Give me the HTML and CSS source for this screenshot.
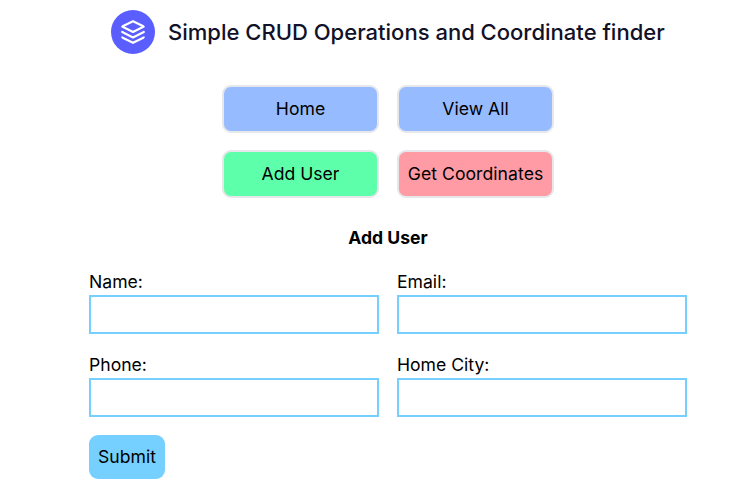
FILE: index.html
```
<!DOCTYPE html>
<html lang="en">
<head>
<meta charset="utf-8">
<title>Add User</title>
<link rel="stylesheet" href="styles.css">
</head>
<body>
<header class="brand">
  <svg class="logo" viewBox="0 0 24 24" fill="none" stroke="currentColor" stroke-width="2" stroke-linecap="round" stroke-linejoin="round"><path d="M12 2L2 7l10 5 10-5-10-5zM2 17l10 5 10-5M2 12l10 5 10-5"/></svg>
  <h1 class="title">Simple CRUD Operations and Coordinate finder</h1>
</header>
<nav class="menu">
  <button class="btn">Home</button>
  <button class="btn">View All</button>
  <button class="btn add">Add User</button>
  <button class="btn coords">Get Coordinates</button>
</nav>
<h2 class="heading">Add User</h2>
<form class="form">
  <label class="field">Name:<input class="input" type="text"></label>
  <label class="field">Email:<input class="input" type="text"></label>
  <label class="field">Phone:<input class="input" type="text"></label>
  <label class="field">Home City:<input class="input" type="text"></label>
  <button class="submit" type="button">Submit</button>
</form>
</body>
</html>
```
FILE: styles.css
```
* { box-sizing: border-box; margin: 0; padding: 0; }
html { overflow: hidden; }
body { width: 741px; height: 494px; background: #fff; color: #000; font: 390 17.6px/26px Inter, sans-serif; padding: 10px 54px 0 89px; }
.brand { display: flex; align-items: center; gap: 13px; margin-left: 22px; height: 44px; }
.logo { width: 44px; height: 44px; padding: 9px; border-radius: 50%; background: #5a5eff; color: #fff; flex: none; }
.title { font-size: 22.03px; font-weight: 490; color: #111128; white-space: nowrap; }
.menu { display: grid; grid-template-columns: 157px 157px; gap: 17px 18px; margin: 31px 0 0 133px; }
.btn { height: 48px; border: 2px solid #e5e7eb; border-radius: 9px; background: #96bbff; font: inherit; color: inherit; white-space: nowrap; }
.add { background: #5dffab; }
.coords { background: #ff9ba4; letter-spacing: .05px; }
.heading { margin-top: 27px; text-align: center; font-size: 17.6px; font-weight: 700; }
.form { display: grid; grid-template-columns: 290px 290px; gap: 18px; margin-top: 18px; }
.field { display: block; height: 65px; }
.input { display: block; width: 100%; height: 39px; border: 2px solid #75cfff; background: #fff; }
.submit { width: 76px; height: 44px; border: 0; border-radius: 9px; background: #75cfff; font: inherit; color: inherit; }
```
